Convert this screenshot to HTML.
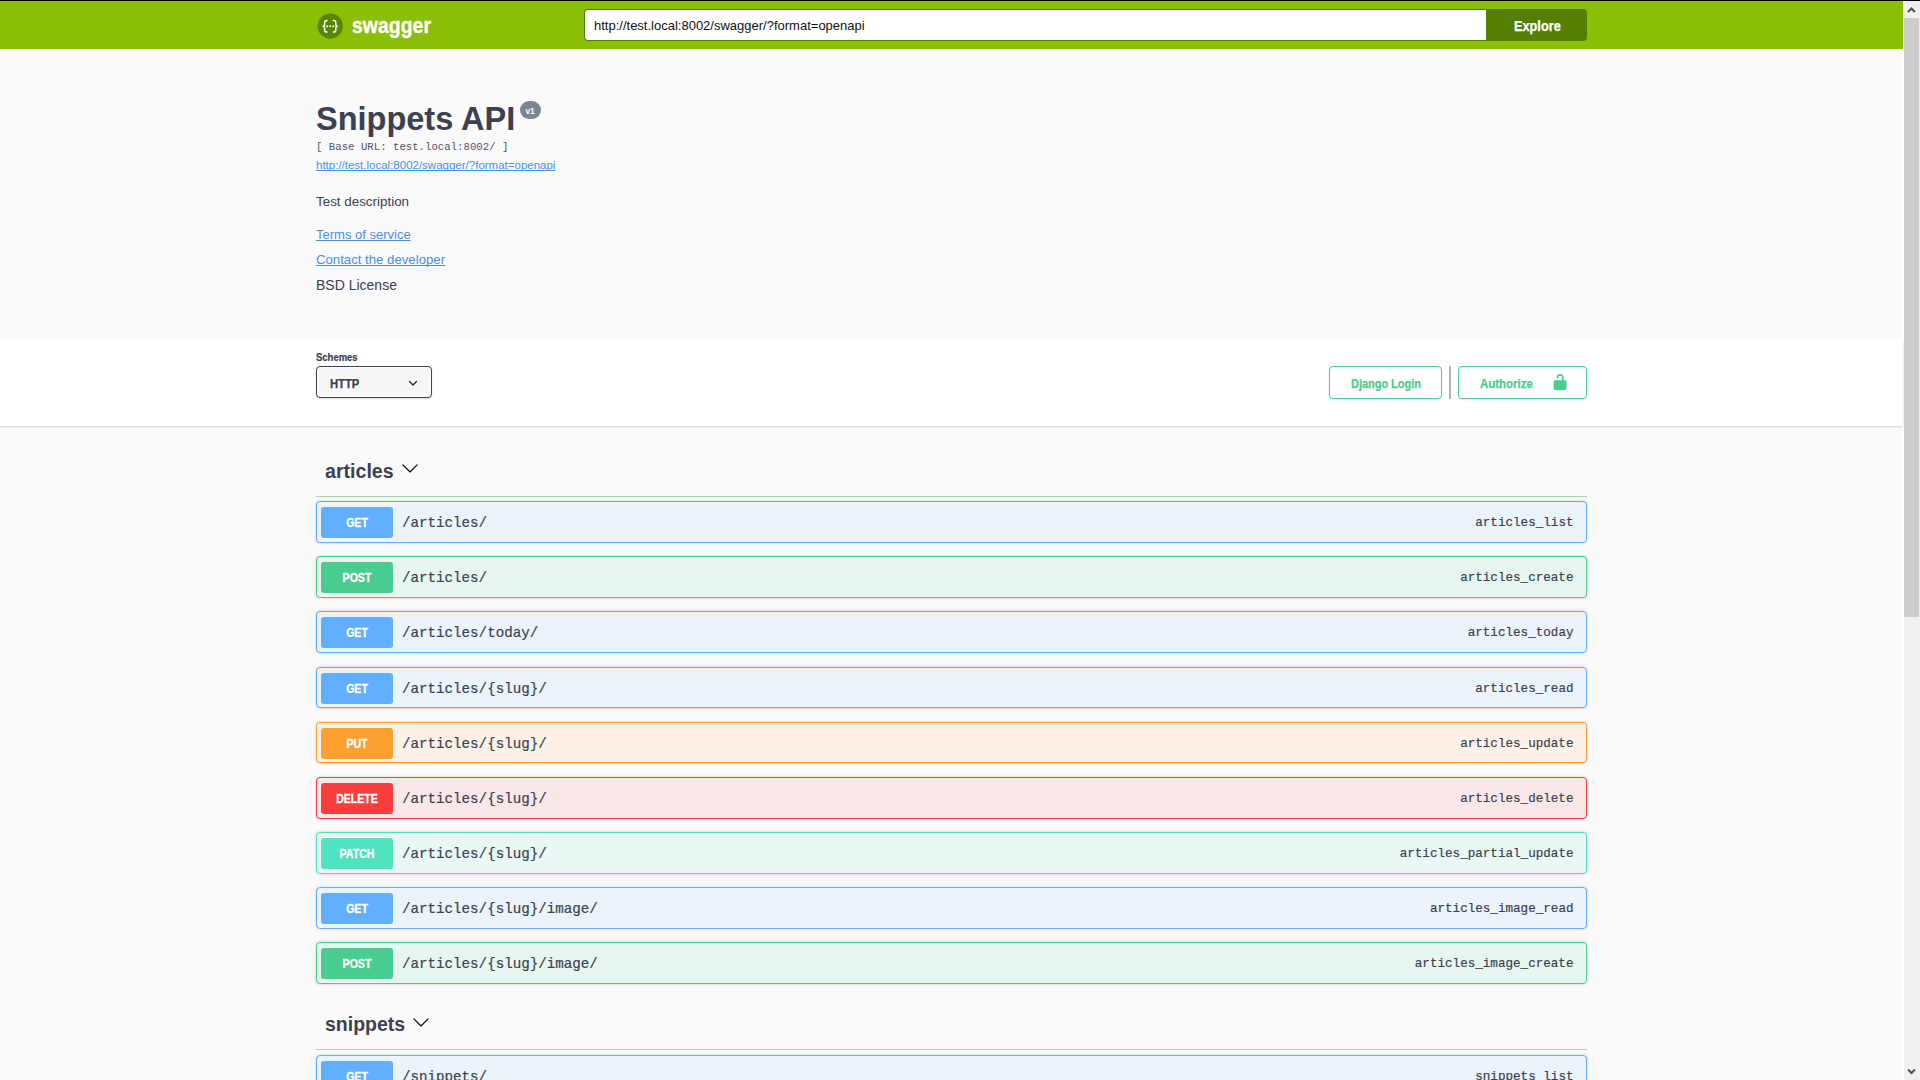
<!DOCTYPE html>
<html><head><meta charset="utf-8">
<style>
*{box-sizing:border-box;margin:0;padding:0}
html,body{width:1920px;height:1080px;overflow:hidden;background:#fafafa;font-family:"Liberation Sans",sans-serif;color:#3b4151}
.a{position:absolute;white-space:pre;line-height:1;transform-origin:0 50%}
#blk{position:absolute;left:0;top:0;width:1920px;height:1px;background:#000}
#topbar{position:absolute;left:0;top:1px;width:1903px;height:48px;background:#89bf04}
#sb{position:absolute;left:1904px;top:1px;width:16px;height:1079px;background:#f0f0f0;box-shadow:-1px 0 0 #fff}
#thumb{position:absolute;left:1904px;top:18px;width:15px;height:599px;background:#cdcdcd}
#inp{position:absolute;left:584px;top:9px;width:903px;height:32px;background:#fff;border:1px solid #547f00;border-right:none;border-radius:4px 0 0 4px}
#exp{position:absolute;left:1486px;top:9px;width:101px;height:32px;background:#547f00;border-radius:0 4px 4px 0}
#band{position:absolute;left:0;top:339px;width:1903px;height:87px;background:#fff;box-shadow:0 1px 2px 0 rgba(0,0,0,.15)}
#sel{position:absolute;left:316px;top:366px;width:116px;height:32px;background:#f7f7f7;border:1px solid #41444e;border-radius:4px;box-shadow:inset 0 0 0 1px #fff,0 1px 2px 0 rgba(0,0,0,.15)}
.btn{position:absolute;top:366px;height:33px;border:1px solid #49cc90;border-radius:4px;background:transparent;box-shadow:0 1px 2px rgba(0,0,0,.1)}
.ob{position:absolute;left:316px;width:1271px;height:42px;border:1px solid;border-radius:4px;box-shadow:0 0 3px rgba(0,0,0,.19)}
.ob .m{position:absolute;left:4px;top:5px;width:72px;height:30.6px;border-radius:3px;color:#fff}
.ob .m span{position:absolute;left:0;width:72px;text-align:center;top:9.8px;font-weight:bold;font-size:12px;line-height:1;text-shadow:0 1px 0 rgba(0,0,0,.1);-webkit-text-stroke:.3px #fff;transform:scaleX(.88)}
.ob .p{position:absolute;left:85px;top:14.3px;-webkit-text-stroke:.2px #3b4151;font-family:"Liberation Mono",monospace;font-size:14.2px;line-height:1;color:#3b4151;white-space:pre}
.ob .o{position:absolute;right:12.5px;top:15.1px;-webkit-text-stroke:.2px #3b4151;font-family:"Liberation Mono",monospace;font-size:12.6px;line-height:1;color:#3b4151;white-space:pre}
.get{border-color:#61affe;background:#ebf3fb}.get .m{background:#61affe}
.post{border-color:#49cc90;background:#e8f6f0}.post .m{background:#49cc90}
.put{border-color:#fca130;background:#fbf1e6}.put .m{background:#fca130}
.del{border-color:#f93e3e;background:#fae7e7}.del .m{background:#f93e3e}
.pat{border-color:#50e3c2;background:#e9f8f4}.pat .m{background:#50e3c2}
.hr{position:absolute;left:316px;width:1271px;height:1px;background:#c1c3c7}
svg{position:absolute;overflow:visible}
</style></head><body>
<div id="blk"></div>
<div id="topbar"></div>
<svg style="left:317px;top:13px" width="26" height="26" viewBox="0 0 26 26">
<circle cx="13.2" cy="13" r="12.6" fill="#578602"/>
<g fill="none" stroke="#fff" stroke-width="1.5" stroke-linecap="round">
<path d="M10 7.6C8.4 7.6 7.6 8.2 7.6 9.6V11.4C7.6 12.4 6.9 13.2 5.6 13.2C6.9 13.2 7.6 14 7.6 15V16.9C7.6 18.4 8.4 19.1 10 19.1"/>
<path d="M16.4 7.6C18 7.6 18.8 8.2 18.8 9.6V11.4C18.8 12.4 19.5 13.2 20.8 13.2C19.5 13.2 18.8 14 18.8 15V16.9C18.8 18.4 18 19.1 16.4 19.1"/>
</g>
<g fill="#fff"><circle cx="10.2" cy="13.2" r="0.95"/><circle cx="13.2" cy="13.2" r="0.95"/><circle cx="16.2" cy="13.2" r="0.95"/></g>
</svg>
<div class="a" style="left:351.5px;top:15.4px;font-size:22px;font-weight:bold;color:#fff;-webkit-text-stroke:.4px #fff;transform:scaleX(.885)">swagger</div>
<div id="inp"></div>
<div class="a" style="left:594px;top:19px;font-size:13px;color:#111">http://test.local:8002/swagger/?format=openapi</div>
<div id="exp"></div>
<div class="a" style="left:1514px;top:18.8px;font-size:14px;font-weight:bold;color:#fff;-webkit-text-stroke:.25px #fff;transform:scaleX(.91)">Explore</div>
<div id="sb"></div><div id="thumb"></div>
<svg style="left:1905px;top:3px" width="13" height="12" viewBox="0 0 13 12"><path d="M3 9L6.5 5.5L10 9" fill="none" stroke="#505050" stroke-width="2"/></svg>
<svg style="left:1905px;top:1066px" width="13" height="12" viewBox="0 0 13 12"><path d="M3 3.5L6.5 7L10 3.5" fill="none" stroke="#505050" stroke-width="2"/></svg>

<div class="a" style="left:316px;top:102.1px;font-size:33px;font-weight:bold;transform:scaleX(.985)">Snippets API</div>
<div class="a" style="left:520px;top:101px;width:21px;height:18px;border-radius:9px;background:#7d8492"></div>
<div class="a" style="left:525.5px;top:107.2px;font-size:8.3px;font-weight:bold;color:#fff">v1</div>
<div class="a" style="left:316px;top:141.5px;font-family:'Liberation Mono',monospace;font-size:10.7px;color:#50566a">[ Base URL: test.local:8002/ ]</div>
<div class="a" style="left:316px;top:160px;font-size:11.5px;color:#4990e2;text-decoration:underline;text-decoration-skip-ink:none">http://test.local:8002/swagger/?format=openapi</div>
<div class="a" style="left:316px;top:194.9px;font-size:13.4px">Test description</div>
<div class="a" style="left:316px;top:228px;font-size:13px;color:#4990e2;text-decoration:underline;text-decoration-skip-ink:none">Terms of service</div>
<div class="a" style="left:316px;top:252.9px;font-size:13.2px;color:#4990e2;text-decoration:underline;text-decoration-skip-ink:none">Contact the developer</div>
<div class="a" style="left:316px;top:278px;font-size:14px">BSD License</div>

<div id="band"></div>
<div class="a" style="left:316px;top:353px;font-size:10.2px;font-weight:bold;-webkit-text-stroke:.2px #3b4151;transform:scaleX(.93)">Schemes</div>
<div id="sel"></div>
<div class="a" style="left:330px;top:377.6px;font-size:12.5px;font-weight:bold;-webkit-text-stroke:.25px #3b4151;transform:scaleX(.9)">HTTP</div>
<svg style="left:403.7px;top:373.5px" width="18" height="18" viewBox="0 0 20 20"><path fill="#222" d="M13.418 7.859a.695.695 0 01.978 0 .68.68 0 010 .969l-3.908 3.83a.697.697 0 01-.979 0l-3.908-3.83a.68.68 0 010-.969.695.695 0 01.978 0L10 11l3.418-3.141z"/></svg>
<div class="btn" style="left:1329px;width:113px"></div>
<div class="a" style="left:1351px;top:377.6px;font-size:12.5px;font-weight:bold;color:#49cc90;-webkit-text-stroke:.25px #49cc90;transform:scaleX(.875)">Django Login</div>
<div class="a" style="left:1449px;top:366px;width:2px;height:33px;background:#b0b3b9"></div>
<div class="btn" style="left:1458px;width:129px"></div>
<div class="a" style="left:1480px;top:377.6px;font-size:12.5px;font-weight:bold;color:#49cc90;-webkit-text-stroke:.25px #49cc90;transform:scaleX(.915)">Authorize</div>
<svg style="left:1551px;top:373.2px" width="18.2" height="18.2" viewBox="0 0 20 20"><path fill="#49cc90" d="M15.8 8H14V5.6C14 2.703 12.665 1 10 1 7.334 1 6 2.703 6 5.6V6h2v-.801C8 3.754 8.797 3 10 3c1.203 0 2 .754 2 2.199V8H4c-.553 0-1 .646-1 1.199V17c0 .549.428 1.139.951 1.307l1.197.387C5.672 18.861 6.55 19 7.1 19h5.8c.549 0 1.428-.139 1.951-.307l1.196-.387c.524-.167.953-.757.953-1.306V9.199C17 8.646 16.352 8 15.8 8z"/></svg>

<div class="a" style="left:325px;top:460.7px;font-size:20px;font-weight:bold;transform:scaleX(.98)">articles</div>
<svg style="left:400.7px;top:458.7px" width="18" height="18" viewBox="0 0 20 20"><path fill="#111" d="M17.418 6.109c.272-.268.709-.268.979 0s.271.701 0 .969l-7.908 7.83c-.27.268-.707.268-.979 0l-7.908-7.83c-.27-.268-.27-.701 0-.969.271-.268.709-.268.979 0L10 13.25l7.418-7.141z"/></svg>
<div class="hr" style="top:496px"></div>
<div class="ob get" style="top:501px"><div class="m"><span>GET</span></div><div class="p">/articles/</div><div class="o">articles_list</div></div>
<div class="ob post" style="top:556px"><div class="m"><span>POST</span></div><div class="p">/articles/</div><div class="o">articles_create</div></div>
<div class="ob get" style="top:611px"><div class="m"><span>GET</span></div><div class="p">/articles/today/</div><div class="o">articles_today</div></div>
<div class="ob get" style="top:667px;height:41px"><div class="m"><span>GET</span></div><div class="p">/articles/{slug}/</div><div class="o">articles_read</div></div>
<div class="ob put" style="top:722px;height:41px"><div class="m"><span>PUT</span></div><div class="p">/articles/{slug}/</div><div class="o">articles_update</div></div>
<div class="ob del" style="top:777px"><div class="m"><span>DELETE</span></div><div class="p">/articles/{slug}/</div><div class="o">articles_delete</div></div>
<div class="ob pat" style="top:832px"><div class="m"><span>PATCH</span></div><div class="p">/articles/{slug}/</div><div class="o">articles_partial_update</div></div>
<div class="ob get" style="top:887px"><div class="m"><span>GET</span></div><div class="p">/articles/{slug}/image/</div><div class="o">articles_image_read</div></div>
<div class="ob post" style="top:942px"><div class="m"><span>POST</span></div><div class="p">/articles/{slug}/image/</div><div class="o">articles_image_create</div></div>

<div class="a" style="left:325px;top:1014.3px;font-size:20px;font-weight:bold;transform:scaleX(.975)">snippets</div>
<svg style="left:411.7px;top:1013px" width="18" height="18" viewBox="0 0 20 20"><path fill="#111" d="M17.418 6.109c.272-.268.709-.268.979 0s.271.701 0 .969l-7.908 7.83c-.27.268-.707.268-.979 0l-7.908-7.83c-.27-.268-.27-.701 0-.969.271-.268.709-.268.979 0L10 13.25l7.418-7.141z"/></svg>
<div class="hr" style="top:1049px"></div>
<div class="ob get" style="top:1055px"><div class="m"><span>GET</span></div><div class="p">/snippets/</div><div class="o">snippets_list</div></div>
</body></html>
